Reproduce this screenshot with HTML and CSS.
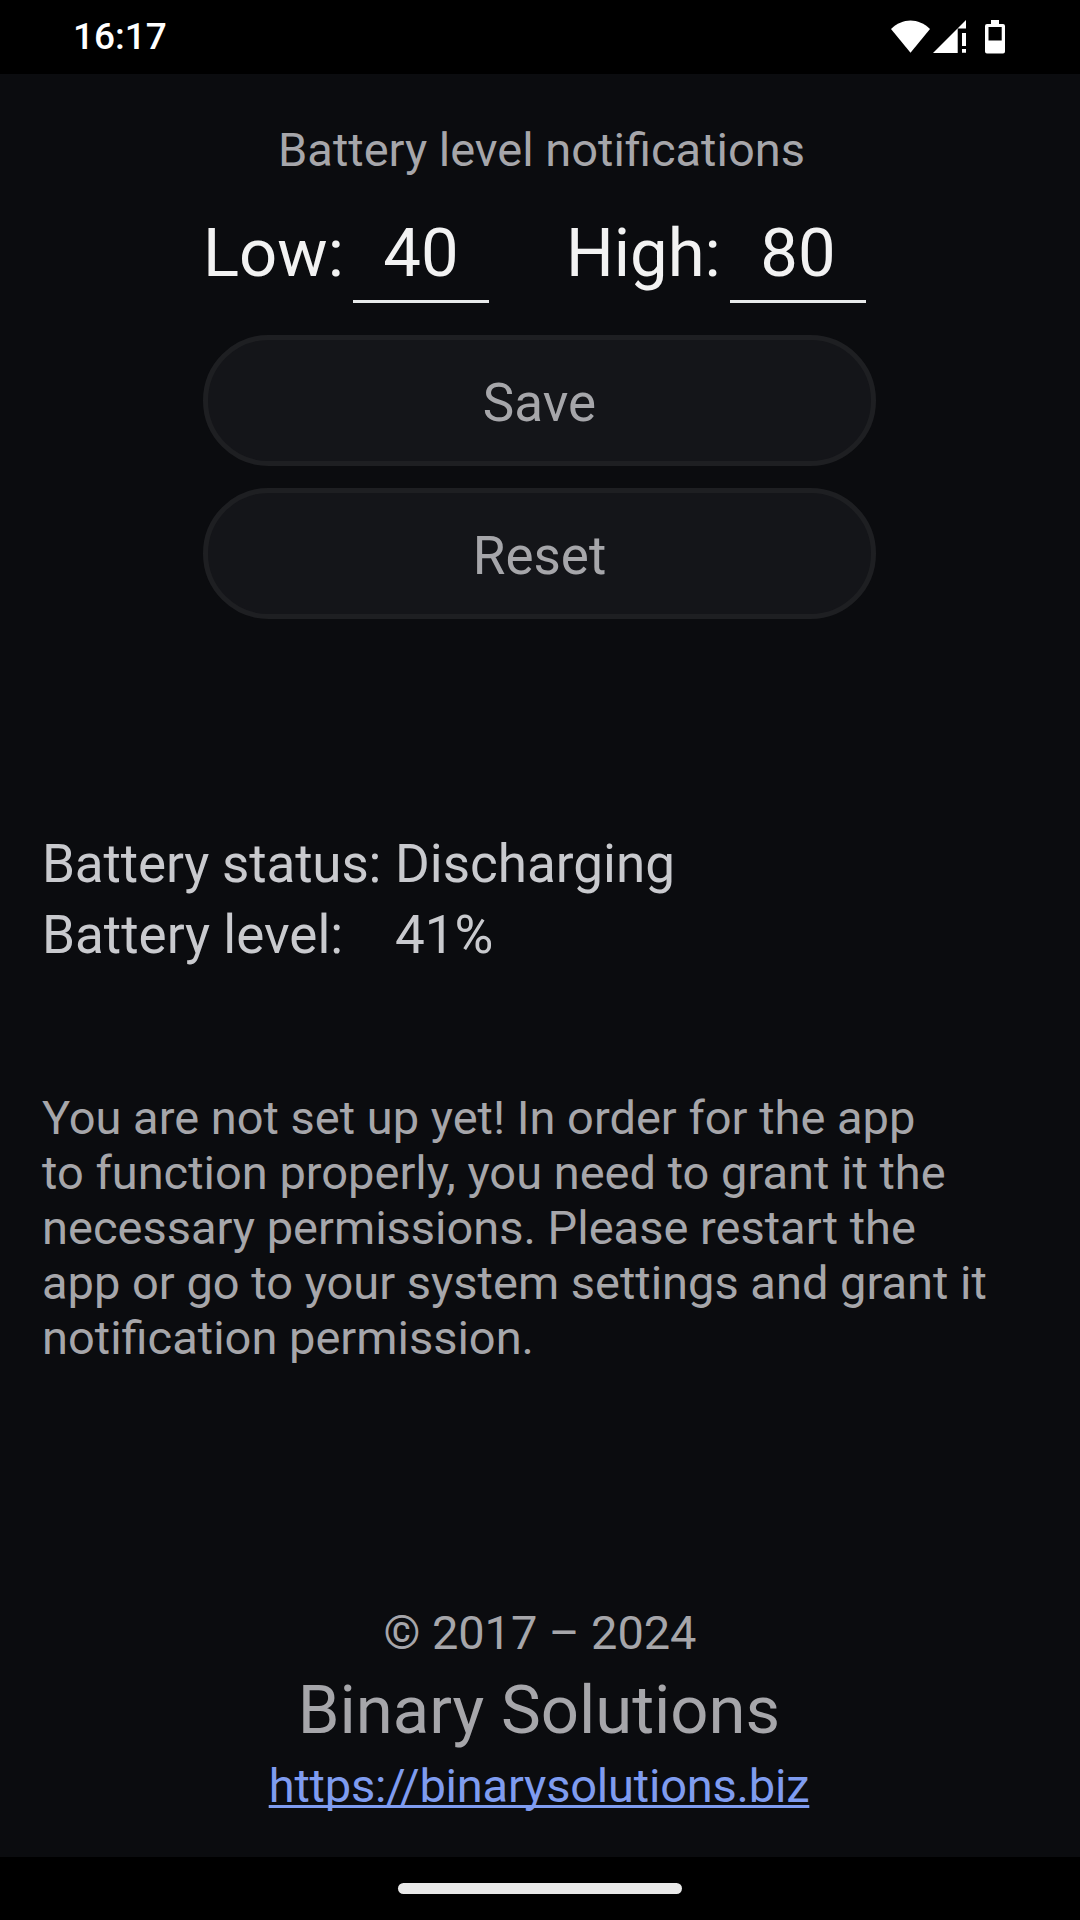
FILE: index.html
```html
<!DOCTYPE html>
<html lang="en">
<head>
<meta charset="utf-8">
<title>Battery level notifications</title>
<link rel="stylesheet" href="styles.css">
</head>
<body>
<header class="status-bar">
  <time class="clock">16:17</time>
  <svg class="status-icons" width="120" height="40" viewBox="0 0 120 40" fill="#fff">
    <path d="M1 12C12.500 .5 28.500 .5 40 12L20.500 35.700Z"/>
    <path d="M43 36L76 3V11.500H67.700V36ZM72 16H76V29H72ZM72 32H76V35.700H72Z"/>
    <path fill-rule="evenodd" d="M101 3H109V7H113Q115 7 115 9V34.500Q115 36.500 113 36.500H97Q95 36.500 95 34.500V9Q95 7 97 7H101ZM98.500 10V23.500H111.700V10Z"/>
  </svg>
</header>
<main class="app">
  <h1 class="title">Battery level notifications</h1>
  <form class="levels">
    <label class="low-label">Low:</label><span class="field low-field">40</span>
    <label class="high-label">High:</label><span class="field">80</span>
  </form>
  <div class="actions">
    <button class="button">Save</button>
    <button class="button">Reset</button>
  </div>
  <dl class="battery">
    <dt class="status-label">Battery status:</dt><dd>Discharging</dd>
    <dt>Battery level:</dt><dd>41%</dd>
  </dl>
  <p class="message">You are not set up yet! In order for the app<br>to function properly, you need to grant it the<br>necessary permissions. Please restart the<br>app or go to your system settings and grant it<br>notification permission.</p>
  <footer class="credits">
    <p class="copyright">© 2017 – 2024</p>
    <p class="company">Binary Solutions</p>
    <a class="link">https://binarysolutions.biz</a>
  </footer>
</main>
<nav class="nav-bar"><div class="handle"></div></nav>
</body>
</html>
```
FILE: styles.css
```css
* { box-sizing: border-box; margin: 0; padding: 0; }
body { width: 1080px; height: 1920px; background: #000; font-family: Roboto, sans-serif; display: flex; flex-direction: column; overflow: hidden; }
.status-bar { height: 74px; padding: 17px 70px 0 73px; display: flex; justify-content: space-between; }
.clock { color: #fff; font-size: 37px; font-weight: 500; line-height: 40px; }
.app { height: 1783px; background: #0b0c0f; color: #a6a6aa; padding-top: 45px; display: flex; flex-direction: column; }
.title { padding-left: 3px; font-size: 47px; font-weight: 400; line-height: 62px; text-align: center; }
.levels { height: 127px; padding: 26px 0 0 203px; display: flex; color: #f2f2f2; font-size: 67px; line-height: 92px; }
.low-label { width: 150px; }
.high-label { width: 164px; }
.field { width: 136px; height: 96px; border-bottom: 3px solid #e8eaea; text-align: center; }
.low-field { margin-right: 77px; }
.actions { padding: 27px 204px 0 203px; display: grid; gap: 22px; }
.button { height: 131px; padding-top: 4px; border: 5px solid #1e1f22; border-radius: 66px; background: #141519; color: #a6a6aa; font: 400 53px Roboto, sans-serif; }
.battery { margin-top: 210px; padding-left: 42px; display: grid; grid-template-columns: 353px auto; grid-auto-rows: 71px; color: #c9cace; font-size: 53px; line-height: 71px; }
.status-label { letter-spacing: -0.15px; }
.message { margin: 119px 42px 0; font-size: 47px; line-height: 55px; white-space: nowrap; }
.credits { margin-top: 237px; padding-right: 2px; text-align: center; display: flex; flex-direction: column; align-items: center; }
.copyright { padding-left: 2px; font-size: 47px; line-height: 62px; letter-spacing: -0.1px; }
.company { font-size: 67px; line-height: 92px; }
.link { margin-top: -1px; font-size: 47px; line-height: 62px; letter-spacing: -0.2px; color: #7f9cf0; text-decoration: underline; text-decoration-thickness: 3px; text-underline-offset: 3px; text-decoration-skip-ink: none; }
.nav-bar { height: 63px; display: flex; justify-content: center; align-items: center; }
.handle { width: 284px; height: 11px; border-radius: 6px; background: #e9e9e9; }
```
